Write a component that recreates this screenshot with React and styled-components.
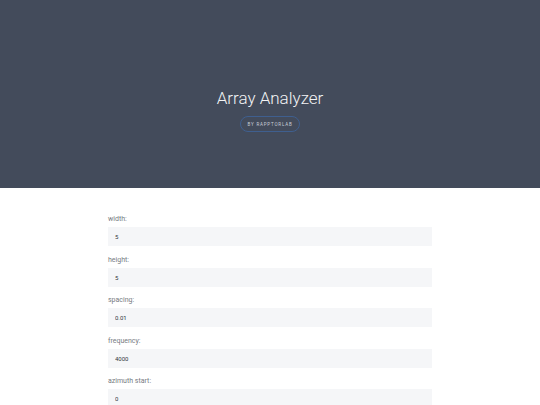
import React from 'react';
import styled, {createGlobalStyle} from 'styled-components';

const GlobalStyle = createGlobalStyle`
    html, body {
        margin: 0;
        padding: 0;
        background: #ffffff;
        font-family: Roboto, "Liberation Sans", sans-serif;
    }
`;

const Header = styled.header`
    height: 188px;
    box-sizing: border-box;
    padding-top: 32px;
    background-color: #434b5b;
    display: flex;
    flex-direction: column;
    align-items: center;
    justify-content: center;
`;

const Title = styled.h1`
    margin: 0;
    font-size: 17px;
    line-height: 20px;
    font-weight: 300;
    color: #f2f3f5;
`;

const Badge = styled.div`
    margin-top: 8px;
    width: 60px;
    height: 16px;
    box-sizing: border-box;
    border: 1px solid #3f5f8f;
    border-radius: 8px;
    display: flex;
    align-items: center;
    justify-content: center;
    font-size: 4.5px;
    font-weight: 400;
    letter-spacing: 0.8px;
    color: #c9ced8;
    text-transform: uppercase;
`;

const Form = styled.form`
    width: 324px;
    margin: 0 auto;
    padding-top: 26px;
`;

const Field = styled.div`
    display: flex;
    flex-direction: column;
    margin-bottom: 8.5px;
`;

const Label = styled.label`
    font-size: 7px;
    line-height: 10px;
    color: #777b82;
    margin-bottom: 3px;
`;

const Input = styled.input`
    height: 19px;
    box-sizing: border-box;
    border: none;
    outline: none;
    background-color: #f5f6f8;
    padding: 0 7px;
    font-family: Roboto, "Liberation Sans", sans-serif;
    font-size: 6px;
    color: #333840;
`;

const fields = [
    {name: 'width', value: '5'},
    {name: 'height', value: '5'},
    {name: 'spacing', value: '0.01'},
    {name: 'frequency', value: '4000'},
    {name: 'azimuth start', value: '0'},
];

export default function App() {
    return (
        <>
            <GlobalStyle />
            <Header>
                <Title>Array Analyzer</Title>
                <Badge>by rapptorlab</Badge>
            </Header>
            <Form>
                {fields.map(field => (
                    <Field key={field.name}>
                        <Label>{field.name}:</Label>
                        <Input defaultValue={field.value} />
                    </Field>
                ))}
            </Form>
        </>
    );
}
